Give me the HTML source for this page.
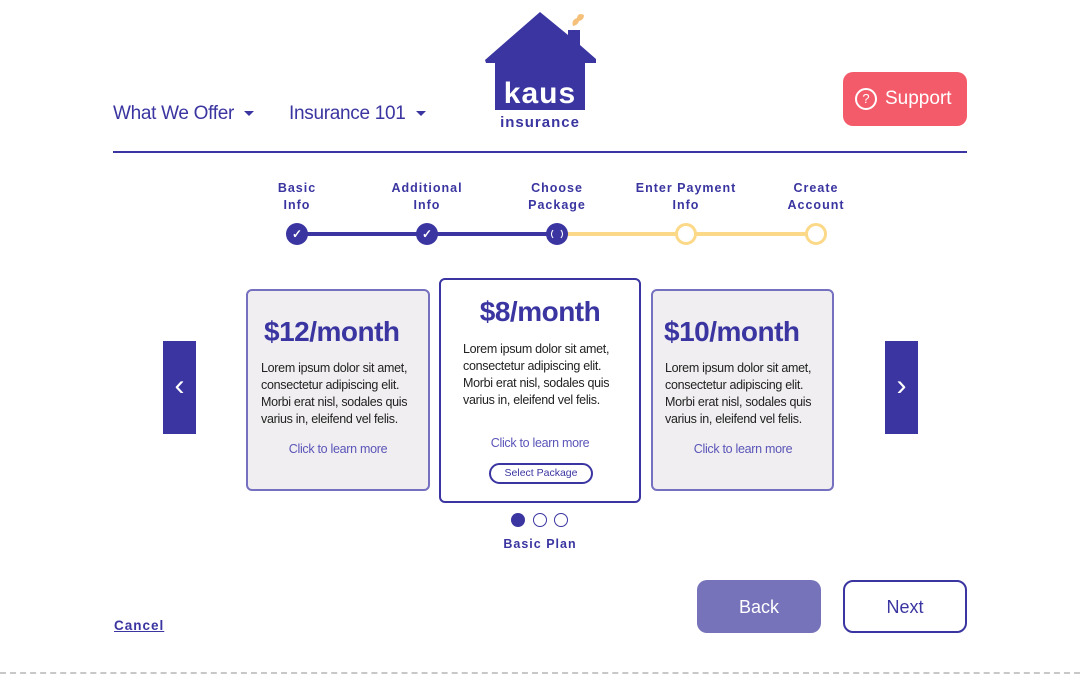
<!DOCTYPE html>
<html><head><meta charset="utf-8"><style>
*{margin:0;padding:0;box-sizing:border-box}
body{width:1080px;height:675px;background:#fff;position:relative;overflow:hidden;font-family:"Liberation Sans",sans-serif;color:#3a35a0}
.abs{position:absolute}
.nav{font-size:19px;color:#3a35a0;top:103px;letter-spacing:-0.3px}
.caret{display:inline-block;width:0;height:0;border-left:5px solid transparent;border-right:5px solid transparent;border-top:5px solid #3a35a0;vertical-align:middle;margin-left:10px}
.step{font-size:12.5px;font-weight:bold;letter-spacing:1px;text-align:center;line-height:17px;top:180px;width:120px}
.dot{width:22px;height:22px;border-radius:50%;top:223px}
.card{border-radius:6px;background:#f0eef0;border:2px solid #7570c0}
.price{font-family:"Liberation Sans",sans-serif;font-weight:bold;font-size:28px;color:#3a35a0;letter-spacing:-0.5px}
.lorem{font-size:12.5px;line-height:17px;color:#222;letter-spacing:-0.3px}
.link{font-size:12.5px;color:#5a55b8;text-align:center;letter-spacing:-0.3px}
.arrow{background:#3a35a0;width:33px;height:93px;color:#fff;font-size:30px;text-align:center;line-height:90px;top:341px}
</style></head><body>
<div class="abs nav" style="left:113px">What We Offer<span class="caret"></span></div>
<div class="abs nav" style="left:289px">Insurance 101<span class="caret"></span></div>

<svg class="abs" style="left:0;top:0" width="1080" height="140">
<path d="M540 12 L485 60 L486 63 L495 63 L495 110 L585 110 L585 63 L596 63 L596 59 L580 45 L580 30 L568 30 L568 35 Z" fill="#3a35a0"/>
<path d="M573 26 q-2 -6 4 -8 q1 -6 7 -3 q0 5 -5 6 q-1 4 -6 5z" fill="#f5c07a"/>
<text x="540" y="103" text-anchor="middle" font-family="Liberation Sans,sans-serif" font-size="30" font-weight="bold" fill="#fff" letter-spacing="1">kaus</text>
<text x="540" y="127" text-anchor="middle" font-family="Liberation Sans,sans-serif" font-size="15" font-weight="bold" fill="#3a35a0" letter-spacing="1">insurance</text>
</svg>

<div class="abs" style="left:843px;top:72px;width:124px;height:54px;background:#f45b6a;border-radius:10px;color:#fff;font-size:19px;line-height:54px;padding-left:42px">Support</div>
<div class="abs" style="left:855px;top:88px;width:22px;height:22px;border:2px solid #fff;border-radius:50%;color:#fff;font-size:13px;text-align:center;line-height:18px">?</div>

<div class="abs" style="left:113px;top:151px;width:854px;height:2px;background:#3a35a0"></div>

<div class="abs step" style="left:237px">Basic<br>Info</div>
<div class="abs step" style="left:367px">Additional<br>Info</div>
<div class="abs step" style="left:497px">Choose<br>Package</div>
<div class="abs step" style="left:626px">Enter Payment<br>Info</div>
<div class="abs step" style="left:756px">Create<br>Account</div>
<div class="abs" style="left:297px;top:232px;width:260px;height:4px;background:#3a35a0"></div>
<div class="abs" style="left:557px;top:232px;width:259px;height:4px;background:#fcd989"></div>
<div class="abs dot" style="left:286px;background:#3a35a0;color:#fff;font-size:12px;text-align:center;line-height:22px;font-weight:bold">✓</div>
<div class="abs dot" style="left:416px;background:#3a35a0;color:#fff;font-size:12px;text-align:center;line-height:22px;font-weight:bold">✓</div>
<div class="abs dot" style="left:546px;background:#3a35a0"><div style="position:absolute;left:5px;top:5px;width:12px;height:12px;border-radius:50%;border:1.5px solid #fff;border-top-color:transparent;border-bottom-color:transparent"></div></div>
<div class="abs dot" style="left:675px;background:#fff;border:3px solid #fcd989"></div>
<div class="abs dot" style="left:805px;background:#fff;border:3px solid #fcd989"></div>

<div class="abs arrow" style="left:163px">‹</div>
<div class="abs arrow" style="left:885px">›</div>

<div class="abs card" style="left:246px;top:289px;width:184px;height:202px">
<div class="abs price" style="left:16px;top:25px">$12/month</div>
<div class="abs lorem" style="left:13px;top:69px;width:165px">Lorem ipsum dolor sit amet, consectetur adipiscing elit. Morbi erat nisl, sodales quis varius in, eleifend vel felis.</div>
<div class="abs link" style="left:0;width:180px;top:151px">Click to learn more</div>
</div>
<div class="abs card" style="left:651px;top:289px;width:183px;height:202px">
<div class="abs price" style="left:11px;top:25px">$10/month</div>
<div class="abs lorem" style="left:12px;top:69px;width:165px">Lorem ipsum dolor sit amet, consectetur adipiscing elit. Morbi erat nisl, sodales quis varius in, eleifend vel felis.</div>
<div class="abs link" style="left:0;width:180px;top:151px">Click to learn more</div>
</div>
<div class="abs card" style="left:439px;top:278px;width:202px;height:225px;background:#fff;border-color:#3a35a0">
<div class="abs price" style="left:0;width:198px;text-align:center;top:16px">$8/month</div>
<div class="abs lorem" style="left:22px;top:61px;width:165px">Lorem ipsum dolor sit amet, consectetur adipiscing elit. Morbi erat nisl, sodales quis varius in, eleifend vel felis.</div>
<div class="abs link" style="left:0;width:198px;top:156px">Click to learn more</div>
<div class="abs" style="left:48px;top:183px;width:104px;height:21px;border:2px solid #3a35a0;border-radius:11px;font-size:10.5px;text-align:center;line-height:17px;color:#3a35a0">Select Package</div>
</div>

<div class="abs" style="left:511px;top:513px;width:14px;height:14px;border-radius:50%;background:#3a35a0"></div>
<div class="abs" style="left:533px;top:513px;width:14px;height:14px;border-radius:50%;border:1.5px solid #3a35a0"></div>
<div class="abs" style="left:554px;top:513px;width:14px;height:14px;border-radius:50%;border:1.5px solid #3a35a0"></div>
<div class="abs" style="left:440px;width:200px;text-align:center;top:537px;font-size:12.5px;font-weight:bold;letter-spacing:1px">Basic Plan</div>

<div class="abs" style="left:697px;top:580px;width:124px;height:53px;background:#7673ba;border-radius:10px;color:#fff;font-size:18px;text-align:center;line-height:54px">Back</div>
<div class="abs" style="left:843px;top:580px;width:124px;height:53px;border:2px solid #3a35a0;border-radius:10px;color:#3a35a0;font-size:18px;text-align:center;line-height:51px">Next</div>
<div class="abs" style="left:114px;top:618px;font-size:13.5px;font-weight:bold;letter-spacing:1px;text-decoration:underline">Cancel</div>

<div class="abs" style="left:0;top:672px;width:1080px;height:0;border-top:2px dashed #c8c8c8"></div>
</body></html>
